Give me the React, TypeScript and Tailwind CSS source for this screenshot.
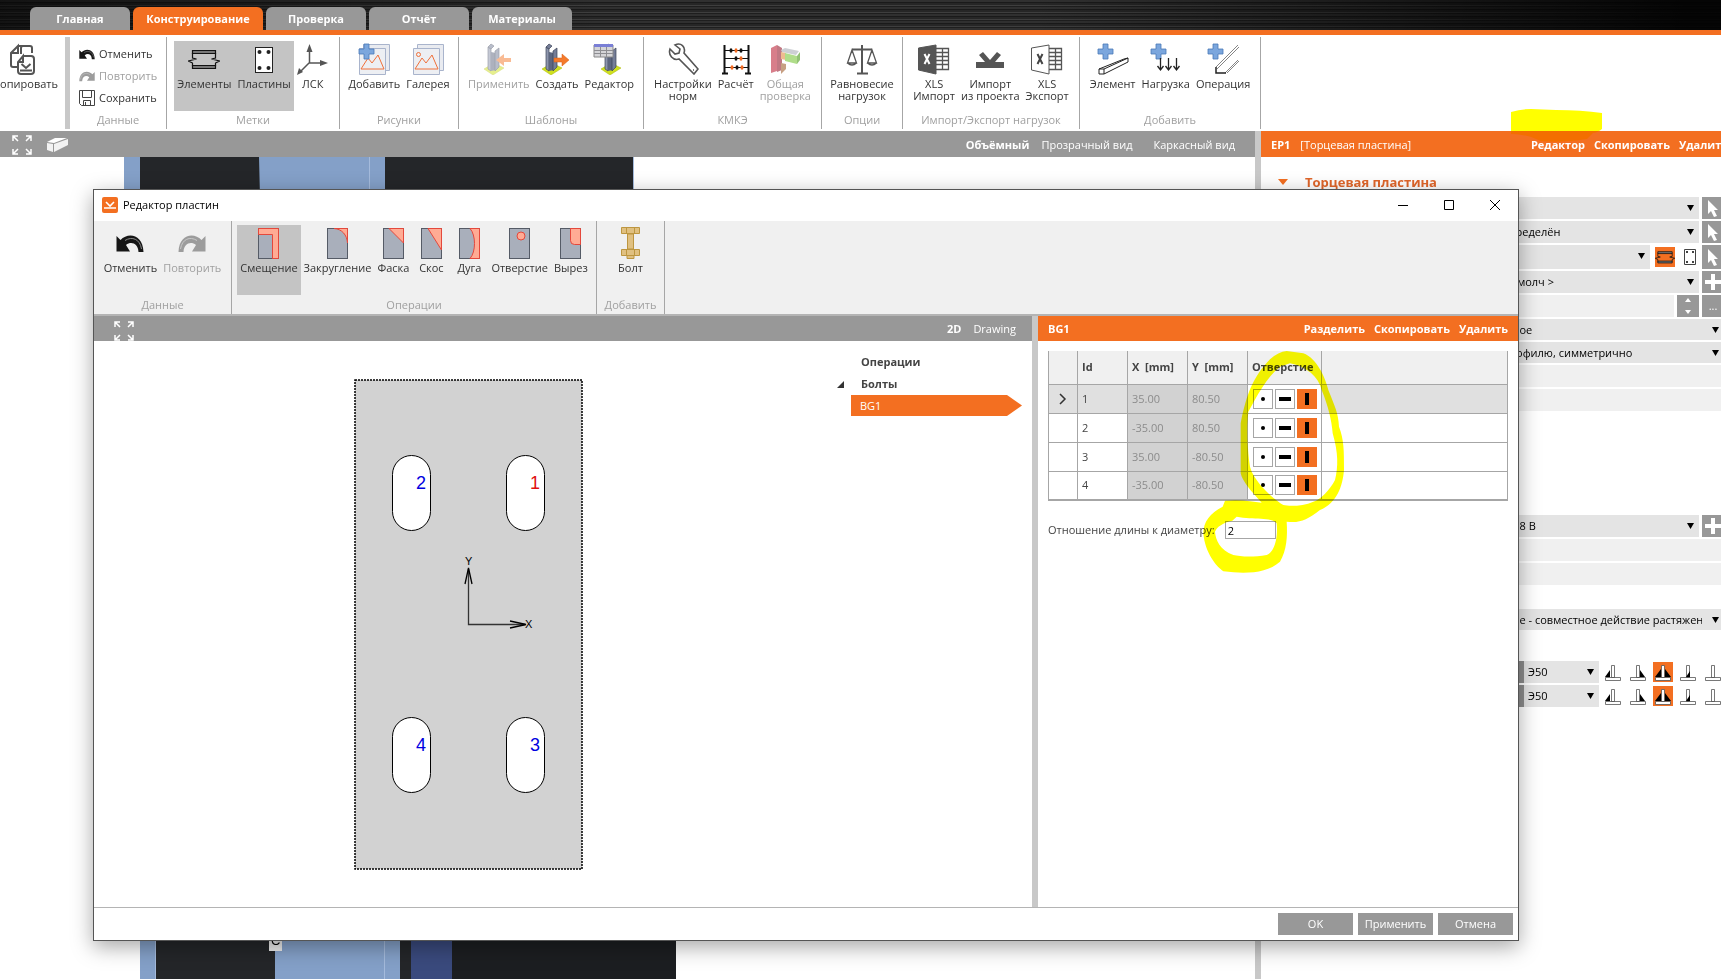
import type { ReactNode } from 'react'
import clsx from 'clsx'

/* ---------- icons: ribbon ---------- */

function CopyIcon() {
  return (
    <svg width="32" height="32" viewBox="0 0 32 32" fill="none" stroke="#555" strokeWidth="2">
      <path d="M15 11V5q0-2 2-2h7q2 0 2 2v5M12 24H7q-2 0-2-2V10l7-7v7H5M12 3h5" />
      <path d="M17 13h8q3 0 3 3v12q0 3-3 3H15q-3 0-3-3v-9l5-6v6h-5" />
      <path d="M14 27.500h12M15.500 21l4.500 4 4.500-4" strokeWidth="2" />
    </svg>
  )
}

function UndoIcon({ size = 16, muted = false }: { size?: number; muted?: boolean }) {
  return (
    <svg width={size} height={size} viewBox="0 0 28 28" className={muted ? '-scale-x-100' : ''}>
      <path
        d="M.5 7l4 4C12 3 27 5 27.500 23h-5C22 14 15 12 10 16l4 6.500H.5z"
        fill={muted ? '#9c9c9c' : '#161616'}
      />
      <path d="M9 11.500C16 7 24 10 25.500 20" stroke={muted ? '#c8c8c8' : '#888'} strokeWidth="1" fill="none" />
    </svg>
  )
}

function SaveIcon() {
  return (
    <svg width="16" height="16" viewBox="0 0 16 16" fill="none" stroke="#444">
      <path d="M.5.5h15v15h-13l-2-2z" />
      <path d="M3.5.5v7h9v-7M4.5 15.5v-5h7v5M6.5 12v3" />
    </svg>
  )
}

function BeamIcon({ size = 32 }: { size?: number }) {
  return (
    <svg width={size} height={size} viewBox="0 0 32 32" fill="none" stroke="#111">
      <path d="M4.500 7.500h23v3h-23zM4.500 22.500h23v3h-23z" fill="#777" strokeWidth="1.200" />
      <path d="M4.500 10v5l4 1-8 2 4 2v3M27.500 10v5l-4 1 8 2-4 2v3" strokeWidth="1.200" />
    </svg>
  )
}

function PlateIcon() {
  return (
    <svg width="32" height="32" viewBox="0 0 32 32">
      <rect x="7.500" y="4.500" width="17" height="25" fill="#fff" stroke="#222" />
      <g fill="#222">
        <circle cx="11.500" cy="9" r="2" />
        <circle cx="20.500" cy="9" r="2" />
        <circle cx="11.500" cy="25" r="2" />
        <circle cx="20.500" cy="25" r="2" />
      </g>
    </svg>
  )
}

function AxesIcon() {
  return (
    <svg width="32" height="32" viewBox="0 0 32 32" stroke="#555" fill="#555">
      <path d="M12.500 5v15H28M12 20l-9 9" fill="none" strokeWidth="1.500" />
      <path d="M12.500 1l3 8h-6zM31 20l-8-3v6zM0 32l2-7 4 4z" stroke="none" />
    </svg>
  )
}

function Plus() {
  return <path d="M6 1h5v5h5v5h-5v5H6v-5H1V6h5z" fill="#7ba6dd" stroke="#4a7ab8" strokeWidth="0.800" />
}

function ImageIcon({ add = false }: { add?: boolean }) {
  return (
    <svg width="32" height="32" viewBox="0 0 32 32" fill="none">
      <path d="M5.500 1.500h26v26h-26z" fill="#e9ebf0" stroke="#a9b4cc" />
      <path d="M1.500 5.500h26v26h-26z" fill="#edeff3" stroke="#a9b4cc" />
      <path d="M3 26l7-11 4 5 6-8 6 14z" stroke="#f0703a" />
      {add ? <Plus /> : <circle cx="6.500" cy="11.500" r="2" stroke="#f0703a" />}
    </svg>
  )
}

function TemplateIcon({ kind }: { kind: 'apply' | 'create' | 'edit' }) {
  return (
    <svg width="32" height="32" viewBox="0 0 32 32" className={kind === 'apply' ? 'opacity-50' : ''}>
      <g transform={kind === 'edit' ? 'translate(7 0)' : undefined}>
        <path d="M1 26l10-6 10 5-11 7z" fill="#cfe01e" stroke="#aab800" strokeWidth="0.500" />
        <path d="M5 4l3 2v22l-3-2z" fill="#8d95ad" stroke="#3b4258" strokeWidth="0.700" />
        <path d="M8 9l5 1v17l-5 1z" fill="#5d667f" />
        <path d="M5 4l3-3 3 2-3 3zM12 8l4-3v19l-4 4z" fill="#747d97" stroke="#3b4258" strokeWidth="0.700" />
      </g>
      {kind === 'apply' && <path d="M28 15v4h-7v4l-8-6 8-6v4z" fill="#f47a2c" />}
      {kind === 'create' && <path d="M13 15v4h8v4l7-6-7-6v4z" fill="#f47a2c" stroke="#d85c10" strokeWidth="0.500" />}
      {kind === 'edit' && (
        <g>
          <path d="M1 2h19v12H1z" fill="#d5d5d8" stroke="#888" />
          <path d="M1 1h19v3H1z" fill="#7a7fd6" />
          <path d="M1 7.500h19M1 10.500h19M7.500 4v10M13.500 4v10" stroke="#8e8e92" />
        </g>
      )}
    </svg>
  )
}

function WrenchIcon() {
  return (
    <svg width="32" height="32" viewBox="0 0 32 32" fill="none" stroke="#555" strokeWidth="1.600">
      <path d="M3 6l5 5 4-1 1-4-5-4c6-3 11 2 9 8l14 16-4 5-15-15C6 18 1 12 3 6z" />
      <path d="M26 27h1" />
    </svg>
  )
}

function AbacusIcon() {
  return (
    <svg width="32" height="32" viewBox="0 0 32 32" stroke="#111" fill="#111">
      <path d="M4.500 2v28M28.500 2v28M2 30.500h6M25 30.500h6" strokeWidth="2" />
      <path d="M4 7.500h24M4 15.500h24M4 24.500h24" />
      <g stroke="none">
        <ellipse cx="11" cy="7.500" rx="1.500" ry="2.300" />
        <ellipse cx="21" cy="7.500" rx="1.500" ry="2.300" />
        <ellipse cx="16" cy="15.500" rx="1.500" ry="2.300" />
        <ellipse cx="17" cy="24.500" rx="1.500" ry="2.300" />
        <g fill="#f26a21">
          <ellipse cx="16" cy="7.500" rx="1.500" ry="2.300" />
          <ellipse cx="21" cy="15.500" rx="1.500" ry="2.300" />
          <ellipse cx="12" cy="24.500" rx="1.500" ry="2.300" />
          <ellipse cx="22" cy="24.500" rx="1.500" ry="2.300" />
        </g>
      </g>
    </svg>
  )
}

function CheckModelIcon() {
  return (
    <svg width="32" height="32" viewBox="0 0 32 32" className="opacity-70">
      <path d="M2 5l6-3v26l-6 2z" fill="#c8485a" />
      <path d="M8 2l5 3v22l-5 2z" fill="#a84050" />
      <path d="M12 7l4-2 14 3-3 4-14-3z" fill="#b9bcc2" />
      <path d="M12 9l5 1v7l-5-1z" fill="#e8a060" />
      <path d="M16 10l12 3v8l-12-3z" fill="#8fcf5a" />
      <path d="M28 13l3-4v8l-3 4z" fill="#64a83c" />
      <path d="M12 20l5 1v5l-5 5z" fill="#b07850" />
    </svg>
  )
}

function ScalesIcon() {
  return (
    <svg width="32" height="32" viewBox="0 0 32 32" fill="none" stroke="#555" strokeWidth="1.300">
      <path d="M16 2v28M6 6.500h20M11 30.500h11" strokeWidth="2" />
      <path d="M6 7L1.500 20h9zM26 7l-4.500 13h9zM1.500 20q4.500 4 9 0M21.500 20q4.500 4 9 0" />
    </svg>
  )
}

function ExcelIcon({ outline = false }: { outline?: boolean }) {
  return (
    <svg width="32" height="32" viewBox="0 0 32 32">
      <path d="M18 5.500h12.500v21H18M18 9.500h12M18 13.500h12M18 17.500h12M18 21.500h12M24.500 6v20" fill="none" stroke="#555" strokeWidth="1.300" />
      <path d="M.5 5L18 2v29L.5 27z" fill={outline ? '#fff' : '#555'} stroke="#555" />
      <path d="M6.500 11l5 10M11.500 11l-5 10" stroke={outline ? '#444' : '#fff'} strokeWidth="2" />
    </svg>
  )
}

function ImportIcon() {
  return (
    <svg width="32" height="32" viewBox="0 0 32 32">
      <path d="M2 19h9L5 12l4-3 7 8 7-8 4 3-6 7h9v6H2z" fill="#555" />
    </svg>
  )
}

function AddIcon({ kind }: { kind: 'member' | 'load' | 'operation' }) {
  return (
    <svg width="32" height="32" viewBox="0 0 32 32" fill="none" stroke="#222">
      <Plus />
      {kind === 'member' && <path d="M2 26l25-10 4-1v4L7 31H2zM2 26h5l24-11M7 26v5" />}
      {kind === 'load' && (
        <path d="M10.500 15v12M18.500 15v12M26.500 15v12M7.500 23l3 4 3-4M15.500 23l3 4 3-4M23.500 23l3 4 3-4" strokeWidth="1.300" />
      )}
      {kind === 'operation' && (
        <g>
          <path d="M31 2L9 24M32 4L10 26M20 30l12-12M18 30l13-13" stroke="#777" strokeWidth="0.900" />
          <path d="M9 24v6h10" strokeWidth="1.500" />
        </g>
      )}
    </svg>
  )
}

/* ---------- icons: plate operations ---------- */

const cuts: Record<string, ReactNode> = {
  offset: <path d="M.5.5h20v30h-6v-24h-14z" />,
  round: <path d="M7 .5h13.500V15C20 7 15 1 7 .5z" />,
  chamfer: <path d="M6 .5h14.500V15z" />,
  bevel: <path d="M7 .5h13.500V22z" />,
  arc: <path d="M11 .5h9.500v30H11C17 24 17 7 11 .5z" />,
  hole: <circle cx="12" cy="8" r="4" />,
  notch: <path d="M10.500.5h10v16h-6q-4 0-4-4z" />,
}

function CutIcon({ kind }: { kind: string }) {
  return (
    <svg width="21" height="31" viewBox="0 0 21 31">
      <rect x="0.500" y="0.500" width="20" height="30" fill="#a9afbb" stroke="#555b66" />
      <g fill="#ffab94" stroke="#e4483c">{cuts[kind]}</g>
    </svg>
  )
}

function BoltIcon() {
  return (
    <svg width="21" height="32" viewBox="0 0 21 32" fill="#e0c080" stroke="#bd9640">
      <path d="M7.500 7h6v15h-6zM1.500.5h18v6h-18zM1.500 22.500h18v6h-18zM7 28.500h7v3H7zM6.500.5v6M14.500.5v6M6.500 22.500v6M14.500 22.500v6" />
    </svg>
  )
}

/* ---------- icons: small ---------- */

function ExpandIcon() {
  return (
    <svg width="20" height="20" viewBox="0 0 20 20" fill="none" stroke="#fff" strokeWidth="1.500">
      <path d="M1 6V1h5M1 1l5 5M14 1h5v5M19 1l-5 5M1 14v5h5M1 19l5-5M19 14v5h-5M19 19l-5-5" />
    </svg>
  )
}

function SolidIcon() {
  return (
    <svg width="21" height="14" viewBox="0 0 21 14">
      <path d="M0 4L8 0h12L7 5z" fill="#fff" />
      <path d="M0 5l6 1v8l-6-2zM7 6l14-5v6L7 14z" fill="#f2f2f2" />
    </svg>
  )
}

function Caret({ className }: { className?: string }) {
  return (
    <svg width="7" height="6" viewBox="0 0 7 6" className={className}>
      <path d="M0 0h7L3.500 6z" fill="#000" />
    </svg>
  )
}

function CursorIcon() {
  return (
    <svg width="22" height="22" viewBox="0 0 22 22">
      <path d="M6 3v14l3-3 3 6 3-1-3-6h4z" fill="#fff" />
    </svg>
  )
}

function PlusIcon() {
  return (
    <svg width="22" height="22" viewBox="0 0 22 22">
      <path d="M9 3h4v6h6v4h-6v6H9v-6H3V9h6z" fill="#fff" />
    </svg>
  )
}

const weldFills: Record<string, ReactNode> = {
  left: <path d="M2 15l5-7v7z" fill="#000" />,
  right: <path d="M12 8l5 7h-5z" fill="#000" />,
  both: <path d="M2 15l6-8v8zM12 7l6 8h-6z" fill="#000" />,
  butt: <path d="M8 15l4-6v6z" fill="#000" />,
  none: null,
}

function WeldIcon({ kind }: { kind: string }) {
  return (
    <svg width="20" height="20" viewBox="0 0 20 20">
      <path d="M2.500 15.500h15v3h-15zM8.500 3.500h3v12h-3z" fill="#fff" stroke="#555" strokeWidth="0.800" />
      {weldFills[kind]}
    </svg>
  )
}

/* ---------- ribbon ---------- */

function Group({ title, className, children }: { title: string; className: string; children: ReactNode }) {
  return (
    <section className={clsx('flex shrink-0 flex-col border-r border-[#a6a6a6] pt-1', className)}>
      <div className="flex h-[70px] justify-center">{children}</div>
      <h2 className="mt-auto text-center leading-[18px] text-[#a0a0a0]">{title}</h2>
    </section>
  )
}

function Tool({ icon, label, active, disabled }: { icon: ReactNode; label: string; active?: boolean; disabled?: boolean }) {
  return (
    <button
      type="button"
      disabled={disabled}
      className={clsx(
        'flex h-full min-w-[38px] flex-col items-center px-[3px] pt-0.5 leading-3 whitespace-pre-line',
        active && 'bg-[#c4c4c4]',
        disabled ? 'text-[#a0a0a0]' : 'text-[#333]',
      )}
    >
      <span className="mb-[3px] flex h-8 items-center">{icon}</span>
      {label}
    </button>
  )
}

function Ribbon() {
  return (
    <div className="flex h-24 shrink-0 bg-white pt-0.5 pb-0.5">
      <section className="flex w-[65px] shrink-0 flex-col items-end overflow-hidden pt-1 pr-1">
        <div className="flex h-[70px]">
          <Tool icon={<span className="-ml-2"><CopyIcon /></span>} label="Копировать" />
        </div>
      </section>
      <div className="w-[5px] shrink-0 bg-[#c8c8c8]" />
      <section className="flex w-[97px] shrink-0 flex-col border-r border-[#a6a6a6] pt-1.5">
        <div className="flex h-[68px] flex-col pl-[9px]">
          <button type="button" className="flex h-[22px] items-center gap-1 text-[#333]"><UndoIcon />Отменить</button>
          <button type="button" disabled className="flex h-[22px] items-center gap-1 text-[#a0a0a0]"><UndoIcon muted />Повторить</button>
          <button type="button" className="flex h-[22px] items-center gap-1 text-[#333]"><SaveIcon />Сохранить</button>
        </div>
        <h2 className="text-center leading-[18px] text-[#a0a0a0]">Данные</h2>
      </section>
      <Group title="Метки" className="w-[173px]">
        <Tool icon={<BeamIcon />} label="Элементы" active />
        <Tool icon={<PlateIcon />} label="Пластины" active />
        <Tool icon={<AxesIcon />} label="ЛСК" />
      </Group>
      <Group title="Рисунки" className="w-[119px]">
        <Tool icon={<ImageIcon add />} label="Добавить" />
        <Tool icon={<ImageIcon />} label="Галерея" />
      </Group>
      <Group title="Шаблоны" className="w-[185px]">
        <Tool icon={<TemplateIcon kind="apply" />} label="Применить" disabled />
        <Tool icon={<TemplateIcon kind="create" />} label="Создать" />
        <Tool icon={<TemplateIcon kind="edit" />} label="Редактор" />
      </Group>
      <Group title="КМКЭ" className="w-[178px]">
        <Tool icon={<WrenchIcon />} label={'Настройки\nнорм'} />
        <Tool icon={<AbacusIcon />} label="Расчёт" />
        <Tool icon={<CheckModelIcon />} label={'Общая\nпроверка'} disabled />
      </Group>
      <Group title="Опции" className="w-[81px]">
        <Tool icon={<ScalesIcon />} label={'Равновесие\nнагрузок'} />
      </Group>
      <Group title="Импорт/Экспорт нагрузок" className="w-[177px]">
        <Tool icon={<ExcelIcon />} label={'XLS\nИмпорт'} />
        <Tool icon={<ImportIcon />} label={'Импорт\nиз проекта'} />
        <Tool icon={<ExcelIcon outline />} label={'XLS\nЭкспорт'} />
      </Group>
      <Group title="Добавить" className="w-[181px]">
        <Tool icon={<AddIcon kind="member" />} label="Элемент" />
        <Tool icon={<AddIcon kind="load" />} label="Нагрузка" />
        <Tool icon={<AddIcon kind="operation" />} label="Операция" />
      </Group>
    </div>
  )
}

const tabs = ['Главная', 'Конструирование', 'Проверка', 'Отчёт', 'Материалы']

function TabBar() {
  return (
    <nav className="flex h-[35px] shrink-0 items-end gap-[3px] border-b-5 border-[#f36f21] bg-[linear-gradient(90deg,rgba(0,0,0,0.6)_0%,rgba(0,0,0,0)_35%,rgba(0,0,0,0)_60%,rgba(0,0,0,0.9)_98%),repeating-linear-gradient(180deg,#303030_0px,#303030_2px,#1a1a1a_2px,#1a1a1a_3px,#262626_3px,#262626_5px,#3e3e3e_5px,#3e3e3e_6px,#1e1e1e_6px,#1e1e1e_7px)] pl-[30px]">
      {tabs.map((tab) => (
        <button
          key={tab}
          type="button"
          className={clsx(
            'h-[23px] rounded-t-md font-bold text-white',
            tab === 'Конструирование' ? 'w-[130px] bg-[#f36f21]' : 'w-[100px] bg-[#989898]',
          )}
        >
          {tab}
        </button>
      ))}
    </nav>
  )
}

/* ---------- 3D view ---------- */

function Viewport() {
  return (
    <main className="flex min-w-0 flex-1 flex-col">
      <div className="flex h-[26px] shrink-0 items-center bg-[#989898] pt-0.5 pl-3 text-white">
        <button type="button" aria-label="Вписать"><ExpandIcon /></button>
        <button type="button" aria-label="Вид" className="ml-[15px]"><SolidIcon /></button>
        <button type="button" className="mr-3 ml-auto font-bold">Объёмный</button>
        <button type="button" className="mr-[21px]">Прозрачный вид</button>
        <button type="button" className="mr-5">Каркасный вид</button>
      </div>
      <div className="flex min-h-0 flex-1 flex-col justify-between bg-white">
        <svg width="700" height="40">
          <path d="M124 0h510v40H124z" fill="#242629" />
          <path d="M124 0h16v40h-16zM259 0h126v40H260z" fill="#84a0c8" />
          <path d="M369.500 0v40M633.500 0v40" stroke="#a5bbdc" />
        </svg>
        <svg width="700" height="60">
          <path d="M140 0h260v60H140z" fill="#242629" />
          <path d="M400 0h276v60H400z" fill="#1c1e21" />
          <path d="M140 0h15v60h-15zM275 0h125v60H275z" fill="#84a0c8" />
          <path d="M384.500 0v60M155.500 0v60" stroke="#a5bbdc" />
          <path d="M400 0h11v60h-11z" fill="#242629" />
          <path d="M411 0h41v60h-41z" fill="#3a4a7d" />
          <path d="M269 10h13v22h-13z" fill="#ececec" />
          <text x="271" y="26" fontSize="13" fontFamily="Liberation Sans, sans-serif">C</text>
        </svg>
      </div>
    </main>
  )
}

/* ---------- property panel ---------- */

function Field({ label, value }: { label: string; value: string }) {
  return (
    <div className="relative h-full min-w-0 flex-1">
      <select aria-label={label} className="h-full w-full appearance-none bg-[#e4e4e4] pr-[22px] pl-1 text-black outline-none">
        <option>{value}</option>
      </select>
      <Caret className="pointer-events-none absolute top-2 right-[5px]" />
    </div>
  )
}

function SquareButton({ label, children }: { label: string; children: ReactNode }) {
  return (
    <button type="button" aria-label={label} className="flex h-full w-[22px] shrink-0 items-center justify-center bg-[#989898] text-white">
      {children}
    </button>
  )
}

const welds = ['left', 'right', 'both', 'butt', 'none']

function WeldRow({ label }: { label: string }) {
  return (
    <div className="flex h-[22px] items-center">
      <div className="ml-[17px] h-full w-[26px] bg-[#8c8c8c]" />
      <Field label={label} value="Э50" />
      <div className="ml-1 flex gap-[5px] pr-px">
        {welds.map((w) => (
          <button key={w} type="button" aria-label={w} className={clsx('size-5', w === 'both' && 'bg-[#f36f21]')}>
            <WeldIcon kind={w} />
          </button>
        ))}
      </div>
    </div>
  )
}

function PropertyPanel() {
  return (
    <aside className="w-[460px] shrink-0 bg-white">
      <div className="flex h-[26px] w-[467px] items-center bg-[#f36f21] pt-0.5 pl-2.5 text-white">
        <span className="font-bold">EP1</span>
        <span className="ml-2.5">[Торцевая пластина]</span>
        <div className="ml-auto flex gap-[9px] font-bold">
          <button type="button" className="relative">
            Редактор
            <svg width="94" height="44" className="pointer-events-none absolute -top-[28px] -left-5 mix-blend-multiply">
              <path d="M0 3Q10 0 20 0L45 1Q70 1 91 4V20Q86 24 82 24L76 30Q50 34 30 32L20 28Q10 25 0 25z" fill="#ff0" />
            </svg>
          </button>
          <button type="button">Скопировать</button>
          <button type="button">Удалить</button>
        </div>
      </div>
      <h2 className="mt-4 mb-1.5 flex h-[18px] w-[463px] items-center gap-[17px] pl-[17px] text-[13px] font-bold text-[#e0662a]">
        <svg width="10" height="6"><path d="M0 0h10L5 6z" fill="#f36f21" /></svg>
        Торцевая пластина
      </h2>
      <div className="flex w-[463px] flex-col gap-[2px] pl-[220px]">
        <div className="flex h-[22px] gap-[3px]">
          <Field label="Элемент" value="" />
          <SquareButton label="Выбрать"><CursorIcon /></SquareButton>
        </div>
        <div className="flex h-[22px] gap-[3px]">
          <Field label="Соединить с" value="Не определён" />
          <SquareButton label="Выбрать"><CursorIcon /></SquareButton>
        </div>
        <div className="flex h-6 items-center">
          <Field label="Сторона" value="" />
          <button type="button" aria-label="Балка" className="ml-[5px] flex size-5 items-center justify-center bg-[#f36f21]"><BeamIcon size={20} /></button>
          <button type="button" aria-label="Пластина" className="mr-0.5 ml-[5px] flex size-5 items-center justify-center">
            <svg width="12" height="16" viewBox="0 0 12 16">
              <path d="M.5.5h11v15H.5z" fill="#fff" stroke="#444" />
              <path d="M2 2h2v2H2zM8 2h2v2H8zM2 12h2v2H2zM8 12h2v2H8z" fill="#444" />
            </svg>
          </button>
          <SquareButton label="Выбрать"><CursorIcon /></SquareButton>
        </div>
        <div className="flex h-[22px] gap-[3px]">
          <Field label="Материал" value="< По умолч >" />
          <SquareButton label="Новый"><PlusIcon /></SquareButton>
        </div>
        <div className="flex h-[22px] gap-[3px]">
          <input aria-label="Толщина" className="h-full min-w-0 flex-1 bg-[#f0f0f0]" />
          <SquareButton label="Шаг">
            <svg width="6" height="16"><path d="M3 0l3 4H0zM0 12h6l-3 4z" fill="#fff" /></svg>
          </SquareButton>
          <SquareButton label="Подробнее">...</SquareButton>
        </div>
        <div className="flex h-[21px]"><Field label="Тип" value="Двойное" /></div>
        <div className="flex h-[21px]"><Field label="Размеры" value="По профилю, симметрично" /></div>
        <input aria-label="Ширина" className="h-[22px] bg-[#f0f0f0]" />
        <input aria-label="Высота" className="h-[22px] bg-[#f0f0f0]" />
        <div className="mt-[102px] flex h-[22px] gap-[3px]">
          <Field label="Болты" value="M16 8.8 B" />
          <SquareButton label="Новый"><PlusIcon /></SquareButton>
        </div>
        <input aria-label="Ряды" className="h-[22px] bg-[#f0f0f0]" />
        <input aria-label="Позиции" className="h-[22px] bg-[#f0f0f0]" />
        <div className="mt-[22px] mb-[29px] flex h-[21px]">
          <Field label="Передача сдвига" value="Полное - совместное действие растяжения и сдвига" />
        </div>
        <WeldRow label="Швы полок" />
        <WeldRow label="Швы стенки" />
      </div>
    </aside>
  )
}

/* ---------- plate editor dialog ---------- */

const slots = [
  { id: 2, x: 38, y: 77, color: '#0000e0' },
  { id: 1, x: 152, y: 77, color: '#e01010' },
  { id: 4, x: 38, y: 339, color: '#0000e0' },
  { id: 3, x: 152, y: 339, color: '#0000e0' },
]

function PlateDrawing() {
  return (
    <svg width="230" height="491" viewBox="0 0 230 491" fontFamily="Liberation Sans, sans-serif">
      <rect x="1" y="1" width="227" height="489" fill="#d2d2d2" stroke="#000" strokeWidth="1.500" strokeDasharray="2 1" />
      {slots.map((s) => (
        <g key={s.id}>
          <rect x={s.x + 0.5} y={s.y - 0.5} width="38" height="75" rx="19" fill="#fff" stroke="#000" />
          <text x={s.x + 24} y={s.y + 33} fontSize="18" fill={s.color}>{s.id}</text>
        </g>
      ))}
      <path d="M114.500 190v55.500H171" fill="none" stroke="#333" strokeWidth="1.300" />
      <path d="M111 205l3.500-16 3.500 16M156 242l16 3.500-16 3.500" fill="none" stroke="#000" strokeWidth="1.300" />
      <text x="111" y="186" fontSize="11">Y</text>
      <text x="171" y="249" fontSize="11">X</text>
    </svg>
  )
}

const bolts = [
  { id: 1, x: '35.00', y: '80.50' },
  { id: 2, x: '-35.00', y: '80.50' },
  { id: 3, x: '35.00', y: '-80.50' },
  { id: 4, x: '-35.00', y: '-80.50' },
]

function HoleButtons() {
  return (
    <div className="flex gap-[2px]">
      <button type="button" aria-label="Круглое" className="flex size-5 items-center justify-center border border-[#a6a6a6] bg-white">
        <span className="size-1 rounded-full bg-black" />
      </button>
      <button type="button" aria-label="Горизонтальный паз" className="flex size-5 items-center justify-center border border-[#a6a6a6] bg-white">
        <span className="h-1 w-3 bg-black" />
      </button>
      <button type="button" aria-label="Вертикальный паз" className="flex size-5 items-center justify-center bg-[#f36f21]">
        <span className="h-3 w-1 bg-black" />
      </button>
    </div>
  )
}

function BoltTable() {
  return (
    <table className="w-full table-fixed border-collapse border-x border-b-2 border-[#a6a6a6] text-left">
      <colgroup>
        <col className="w-[29px]" />
        <col className="w-[50px]" />
        <col className="w-[60px]" />
        <col className="w-[60px]" />
        <col className="w-[74px]" />
        <col />
      </colgroup>
      <thead>
        <tr className="h-[33px] bg-[#f0f0f0] whitespace-pre text-[#444]">
          <th className="border-r border-[#a6a6a6]" />
          <th className="border-r border-[#a6a6a6] pl-1">Id</th>
          <th className="border-r border-[#a6a6a6] pl-1">X  [mm]</th>
          <th className="border-r border-[#a6a6a6] pl-1">Y  [mm]</th>
          <th className="border-r border-[#a6a6a6] pl-1">Отверстие</th>
          <th />
        </tr>
      </thead>
      <tbody>
        {bolts.map((b) => (
          <tr key={b.id} className={clsx('h-[29px] border-t border-[#a6a6a6] text-[#444]', b.id === 1 && 'bg-[#e0e0e0]')}>
            <td className="border-r border-[#a6a6a6]">
              {b.id === 1 && (
                <svg width="28" height="12" fill="none" stroke="#333" strokeWidth="1.500"><path d="M11 1l5 5-5 5" /></svg>
              )}
            </td>
            <td className="border-r border-[#a6a6a6] pl-1">{b.id}</td>
            <td className="border-r border-[#a6a6a6] bg-[#d2d2d2] pl-1 text-[#8c8c8c]">{b.x}</td>
            <td className="border-r border-[#a6a6a6] bg-[#d2d2d2] pl-1 text-[#8c8c8c]">{b.y}</td>
            <td className="border-r border-[#a6a6a6] bg-white pl-[5px]"><HoleButtons /></td>
            <td />
          </tr>
        ))}
      </tbody>
    </table>
  )
}

function Marker() {
  return (
    <svg width="480" height="233" viewBox="54 3 1440 699" className="pointer-events-none absolute top-0 left-0 mix-blend-multiply" fill="#ff0" fillRule="evenodd">
      <path
        d="M800 33L850 40C890 55 915 110 925 150C945 200 955 220 957 260C972 300 972 330 972 390C968 440 950 490 900 510C860 540 840 550 800 545C803 590 800 630 780 665C740 700 680 702 610 694C590 680 555 640 550 580C550 545 570 520 608 500L615 482Q655 478 690 484L725 488C690 450 668 425 662 400V250C680 160 700 110 750 58Q775 35 800 33z
        M810 70C860 80 895 110 905 150C925 200 935 240 938 280C955 340 955 380 945 420C930 450 900 480 880 485C850 498 810 500 790 495C750 470 700 420 690 380C682 330 680 260 685 215C710 170 740 110 780 80z
        M650 530C700 540 755 530 770 550C775 600 760 640 740 645C700 652 660 650 640 645C600 630 587 600 585 575C590 560 610 548 637 542z"
      />
    </svg>
  )
}

function PlateEditor() {
  return (
    <div role="dialog" aria-label="Редактор пластин" className="absolute top-[189px] right-[202px] bottom-[38px] left-[93px] flex flex-col border border-[#555] bg-white shadow-[0_6px_20px_rgba(0,0,0,0.35)]">
      <div className="flex h-[31px] shrink-0 items-center pr-[18px] pb-0.5 pl-2 text-black">
        <svg width="16" height="16" viewBox="0 0 16 16">
          <rect width="16" height="16" rx="2" fill="#f36f21" />
          <path d="M2 11h12M4 5l4 4 4-4" stroke="#fff" strokeWidth="1.600" fill="none" />
        </svg>
        <span className="ml-[5px]">Редактор пластин</span>
        <div className="ml-auto flex gap-9">
          <button type="button" aria-label="Свернуть"><svg width="10" height="10" stroke="#000"><path d="M0 5.500h10" /></svg></button>
          <button type="button" aria-label="Развернуть"><svg width="10" height="10" stroke="#000" fill="none"><path d="M.5.5h9v9h-9z" /></svg></button>
          <button type="button" aria-label="Закрыть"><svg width="10" height="10" stroke="#000"><path d="M0 0l10 10M10 0L0 10" /></svg></button>
        </div>
      </div>

      <div className="flex h-[95px] shrink-0 border-b-2 border-[#b4b4b4] bg-[#f0f0f0]">
        <Group title="Данные" className="w-[138px]">
          <Tool icon={<UndoIcon size={28} />} label="Отменить" />
          <Tool icon={<UndoIcon size={28} muted />} label="Повторить" disabled />
        </Group>
        <Group title="Операции" className="w-[365px]">
          <Tool icon={<CutIcon kind="offset" />} label="Смещение" active />
          <Tool icon={<CutIcon kind="round" />} label="Закругление" />
          <Tool icon={<CutIcon kind="chamfer" />} label="Фаска" />
          <Tool icon={<CutIcon kind="bevel" />} label="Скос" />
          <Tool icon={<CutIcon kind="arc" />} label="Дуга" />
          <Tool icon={<CutIcon kind="hole" />} label="Отверстие" />
          <Tool icon={<CutIcon kind="notch" />} label="Вырез" />
        </Group>
        <Group title="Добавить" className="w-[68px]">
          <Tool icon={<BoltIcon />} label="Болт" />
        </Group>
      </div>

      <div className="flex min-h-0 flex-1 border-b border-[#b4b4b4]">
        <div className="flex min-w-0 flex-1 flex-col">
          <div className="flex h-[25px] shrink-0 items-center bg-[#989898] pr-4 pl-5 text-white">
            <button type="button" aria-label="Вписать" className="pt-1"><ExpandIcon /></button>
            <button type="button" className="mr-3 ml-auto font-bold">2D</button>
            <button type="button">Drawing</button>
          </div>
          <div className="flex min-h-0 flex-1">
            <div className="flex flex-1 items-center justify-center pl-2">
              <PlateDrawing />
            </div>
            <ul className="w-[196px] pt-2.5 pr-2.5 font-bold text-[#444]">
              <li className="pl-[25px] leading-[22px]">Операции</li>
              <li className="flex items-center pl-px leading-[22px]">
                <svg width="7" height="7" className="mr-[17px]"><path d="M7 0v7H0z" fill="#333" /></svg>
                Болты
              </li>
              <li className="ml-[15px] h-[21px] bg-[#f36f21] pl-[9px] leading-[21px] font-normal text-white [clip-path:polygon(0_0,calc(100%_-_15px)_0,100%_50%,calc(100%_-_15px)_100%,0_100%)]">
                BG1
              </li>
            </ul>
          </div>
        </div>
        <div className="w-1.5 shrink-0 bg-[#c8c8c8]" />
        <div className="flex w-[480px] shrink-0 flex-col">
          <div className="flex h-[25px] shrink-0 items-center gap-[9px] bg-[#f36f21] px-2.5 font-bold text-white">
            <span className="mr-auto">BG1</span>
            <button type="button">Разделить</button>
            <button type="button">Скопировать</button>
            <button type="button">Удалить</button>
          </div>
          <div className="relative flex-1 px-2.5 pt-2.5">
            <BoltTable />
            <div className="mt-5 flex items-center text-[#444]">
              <label htmlFor="ratio">Отношение длины к диаметру:</label>
              <input id="ratio" defaultValue="2" className="ml-2.5 h-[18px] w-[51px] border border-[#a6a6a6] pl-0.5 text-black" />
            </div>
            <Marker />
          </div>
        </div>
      </div>

      <div className="flex h-8 shrink-0 items-center justify-end gap-[5px] pr-[5px]">
        {['OK', 'Применить', 'Отмена'].map((label) => (
          <button key={label} type="button" className="h-[22px] w-[75px] bg-[#989898] text-white">{label}</button>
        ))}
      </div>
    </div>
  )
}

export default function App() {
  return (
    <div className="relative flex h-screen flex-col overflow-hidden bg-white font-['Open_Sans','Noto_Sans',sans-serif] text-[11px] leading-4">
      <TabBar />
      <Ribbon />
      <div className="flex min-h-0 flex-1">
        <Viewport />
        <div className="w-1.5 shrink-0 bg-[#c8c8c8]" />
        <PropertyPanel />
      </div>
      <PlateEditor />
    </div>
  )
}
